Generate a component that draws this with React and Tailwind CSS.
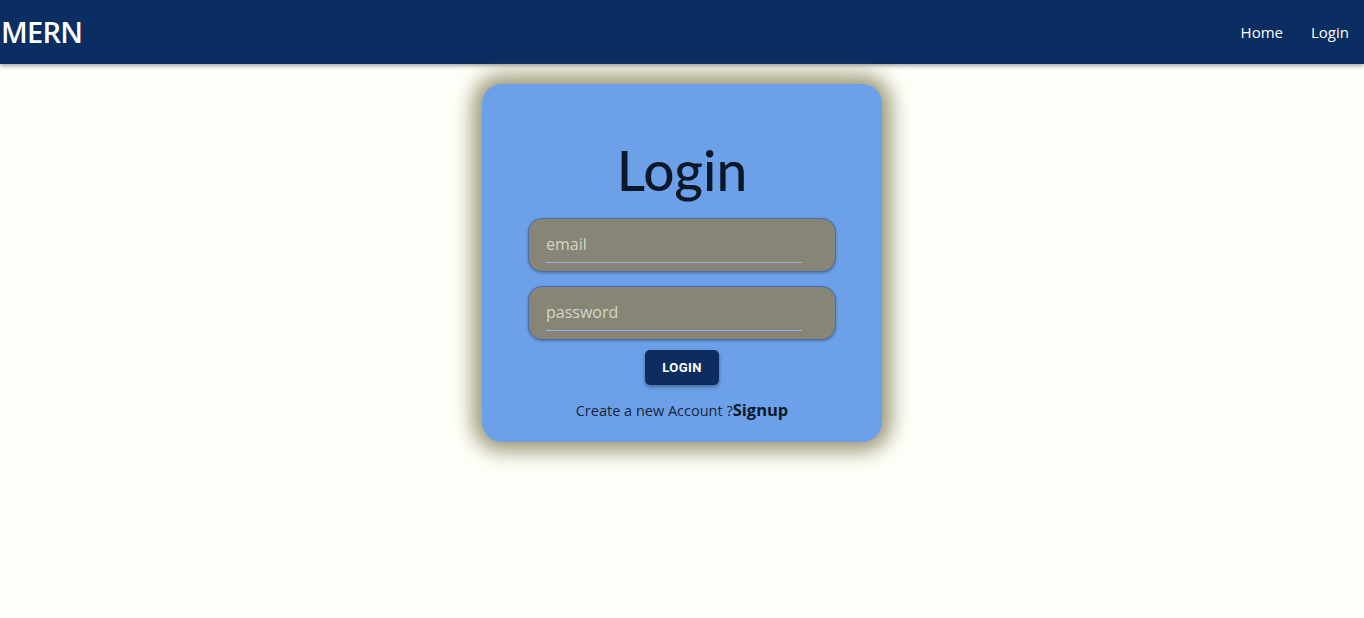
const App = () => {
    return (
        <div className="min-h-[618px] bg-[#fffff9] font-['Open_Sans',sans-serif]">
            <nav className="h-[64px] bg-[#0a2d62] flex items-center justify-between pl-[1px] pr-[15px] shadow-[0_2px_4px_rgba(0,0,0,0.35)]">
                <a className="text-[29px] font-semibold text-white tracking-tight font-['Open_Sans',sans-serif]">MERN</a>
                <div className="flex items-center gap-[28px] text-[15px] text-white">
                    <a>Home</a>
                    <a>Login</a>
                </div>
            </nav>

            <div className="flex justify-center pt-[20px]">
                <div className="w-[400px] h-[358px] rounded-[20px] bg-[#6ca1e9] shadow-[0_0_20px_9px_rgba(110,105,60,0.7)] flex flex-col items-center pt-[54px]">
                    <h1 className="text-[55px] leading-[64px] font-medium text-[#0a1828] font-['Lato',sans-serif] mb-[16px]">Login</h1>

                    <div className="w-[308px] h-[54px] rounded-[14px] bg-[#878576] border border-[#4b6ca8] shadow-[0_1px_3px_rgba(0,0,0,0.3)] px-[17px] pt-[13px]">
                        <input
                            placeholder="email"
                            className="w-[256px] bg-transparent text-[16px] text-[#e0dfd2] placeholder:text-[#d6d5c8] outline-none border-b border-[#93b3ec] pb-[6px]"
                        />
                    </div>

                    <div className="mt-[14px] w-[308px] h-[54px] rounded-[14px] bg-[#878576] border border-[#4b6ca8] shadow-[0_1px_3px_rgba(0,0,0,0.3)] px-[17px] pt-[13px]">
                        <input
                            type="password"
                            placeholder="password"
                            className="w-[256px] bg-transparent text-[16px] text-[#e0dfd2] placeholder:text-[#d6d5c8] outline-none border-b border-[#93b3ec] pb-[6px]"
                        />
                    </div>

                    <button className="mt-[10px] w-[74px] h-[35px] rounded-[5px] bg-[#0c2d5e] text-white text-[13px] font-bold font-['Roboto',sans-serif] tracking-[0.4px] shadow-[0_2px_4px_rgba(0,0,0,0.35)]">
                        LOGIN
                    </button>

                    <p className="mt-[13px] text-[14.5px] text-[#16253a]">
                        Create a new Account ?<a className="text-[16.5px] font-bold text-[#0d1a2a]">Signup</a>
                    </p>
                </div>
            </div>
        </div>
    );
};

export default App;
